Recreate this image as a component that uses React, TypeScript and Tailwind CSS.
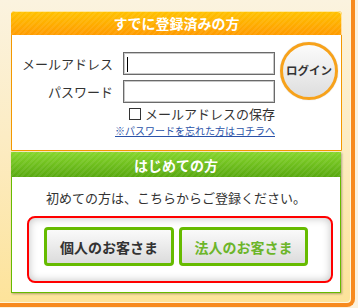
import React from 'react';

const jp = "font-['Noto_Sans_CJK_JP','Noto_Sans',sans-serif]";

const LoginPanel = () => (
  <div className="w-[331px] rounded-t-[4px] border border-[#f39800] bg-white">
    {/* Header */}
    <div className="h-[24px] -m-px mb-0 flex items-center justify-center rounded-t-[4px] bg-[image:repeating-linear-gradient(135deg,rgba(255,255,255,0.07)_0_2px,transparent_2px_4px),linear-gradient(to_bottom,#ffc300,#ff9b00)] shadow-[inset_-1px_1px_0_rgba(255,255,255,0.6)]">
      <span className="text-[14px] font-bold text-white leading-none">すでに登録済みの方</span>
    </div>

    <div className="flex h-[115px] items-start">
      {/* Form */}
      <div className="w-[263px] pt-[17px]">
        <div className="flex items-center">
          <label className="w-[101px] text-right text-[13px] text-[#333] leading-none">メールアドレス</label>
          <div className="relative ml-[10px] h-[23px] w-[152px] border border-[#6a6a6a] bg-white shadow-[inset_0_0_0_1px_#c8c8c8]">
            <div className="absolute left-[3px] top-[4px] h-[15px] w-px bg-black" />
          </div>
        </div>
        <div className="mt-[5px] flex items-center">
          <label className="w-[101px] text-right text-[13px] text-[#333] leading-none">パスワード</label>
          <div className="ml-[10px] h-[23px] w-[152px] border border-[#6a6a6a] bg-white shadow-[inset_0_0_0_1px_#c8c8c8]" />
        </div>
        <div className="mt-[4px] flex h-[14px] items-center justify-end gap-[4px]">
          <div className="h-[12px] w-[12px] border border-[#333] bg-white" />
          <span className="text-[13px] text-[#333] leading-[14px]">メールアドレスの保存</span>
        </div>
        <div className="mt-[1px] text-right leading-[12px]">
          <a href="#" className="text-[10px] leading-[12px] text-[#2a52a8] underline">※パスワードを忘れた方はコチラへ</a>
        </div>
      </div>

      {/* Login button */}
      <button className="ml-[5px] mt-[7px] flex h-[58px] w-[58px] items-center justify-center rounded-full border-[3px] border-[#f7a21b] bg-[linear-gradient(to_bottom,#fbfbfb,#dedede)] shadow-[0_0_1px_rgba(0,0,0,0.3)]">
        <span className="text-[11.5px] font-bold text-[#333] leading-none">ログイン</span>
      </button>
    </div>
  </div>
);

const NewPanel = () => (
  <div className="mt-px w-[330px] border border-[#66bb00] bg-white shadow-[1px_1px_2px_rgba(0,0,0,0.3)]">
    <div className="h-[25px] -m-px mb-0 flex items-center justify-center bg-[image:repeating-linear-gradient(135deg,rgba(255,255,255,0.07)_0_2px,transparent_2px_4px),linear-gradient(to_bottom,#86d62c,#58a810)]">
      <span className="text-[14px] font-bold text-white leading-none">はじめての方</span>
    </div>
    <div className="h-[115px] pt-[13px]">
      <p className="text-center text-[13px] text-[#333] leading-[16px]">初めての方は、こちらからご登録ください。</p>
      <div className="ml-[15px] mt-[10px] flex h-[67px] w-[306px] items-start gap-[5px] rounded-[8px] border-2 border-[#ff0000] pl-[15px] pt-[9px] shadow-[inset_0_0_8px_rgba(0,0,0,0.25)]">
        <button className="flex h-[39px] w-[130px] items-center justify-center rounded-[4px] border-[3px] border-[#66bb00] bg-[linear-gradient(to_bottom,#fafafa,#dcdcdc)]">
          <span className="text-[14px] font-bold text-[#333] leading-none">個人のお客さま</span>
        </button>
        <button className="flex h-[39px] w-[129px] items-center justify-center rounded-[4px] border-[3px] border-[#66bb00] bg-[linear-gradient(to_bottom,#fafafa,#dcdcdc)]">
          <span className="text-[14px] font-bold text-[#6cb52a] leading-none">法人のお客さま</span>
        </button>
      </div>
    </div>
  </div>
);

export default function App() {
  return (
    <div className={`h-[308px] w-[358px] overflow-hidden bg-[#fbf1dc] ${jp}`}>
      <div className="h-[307px] w-[355px] rounded-br-[8px] border-b-4 border-r-4 border-[#f78a1e] bg-[linear-gradient(to_bottom,#fbf3df_0%,#fcecc4_45%,#fde39a_100%)] pl-[11px] pt-[11px] shadow-[inset_-1px_-1px_0_#fff5d8]">
        <LoginPanel />
        <NewPanel />
      </div>
    </div>
  );
}
